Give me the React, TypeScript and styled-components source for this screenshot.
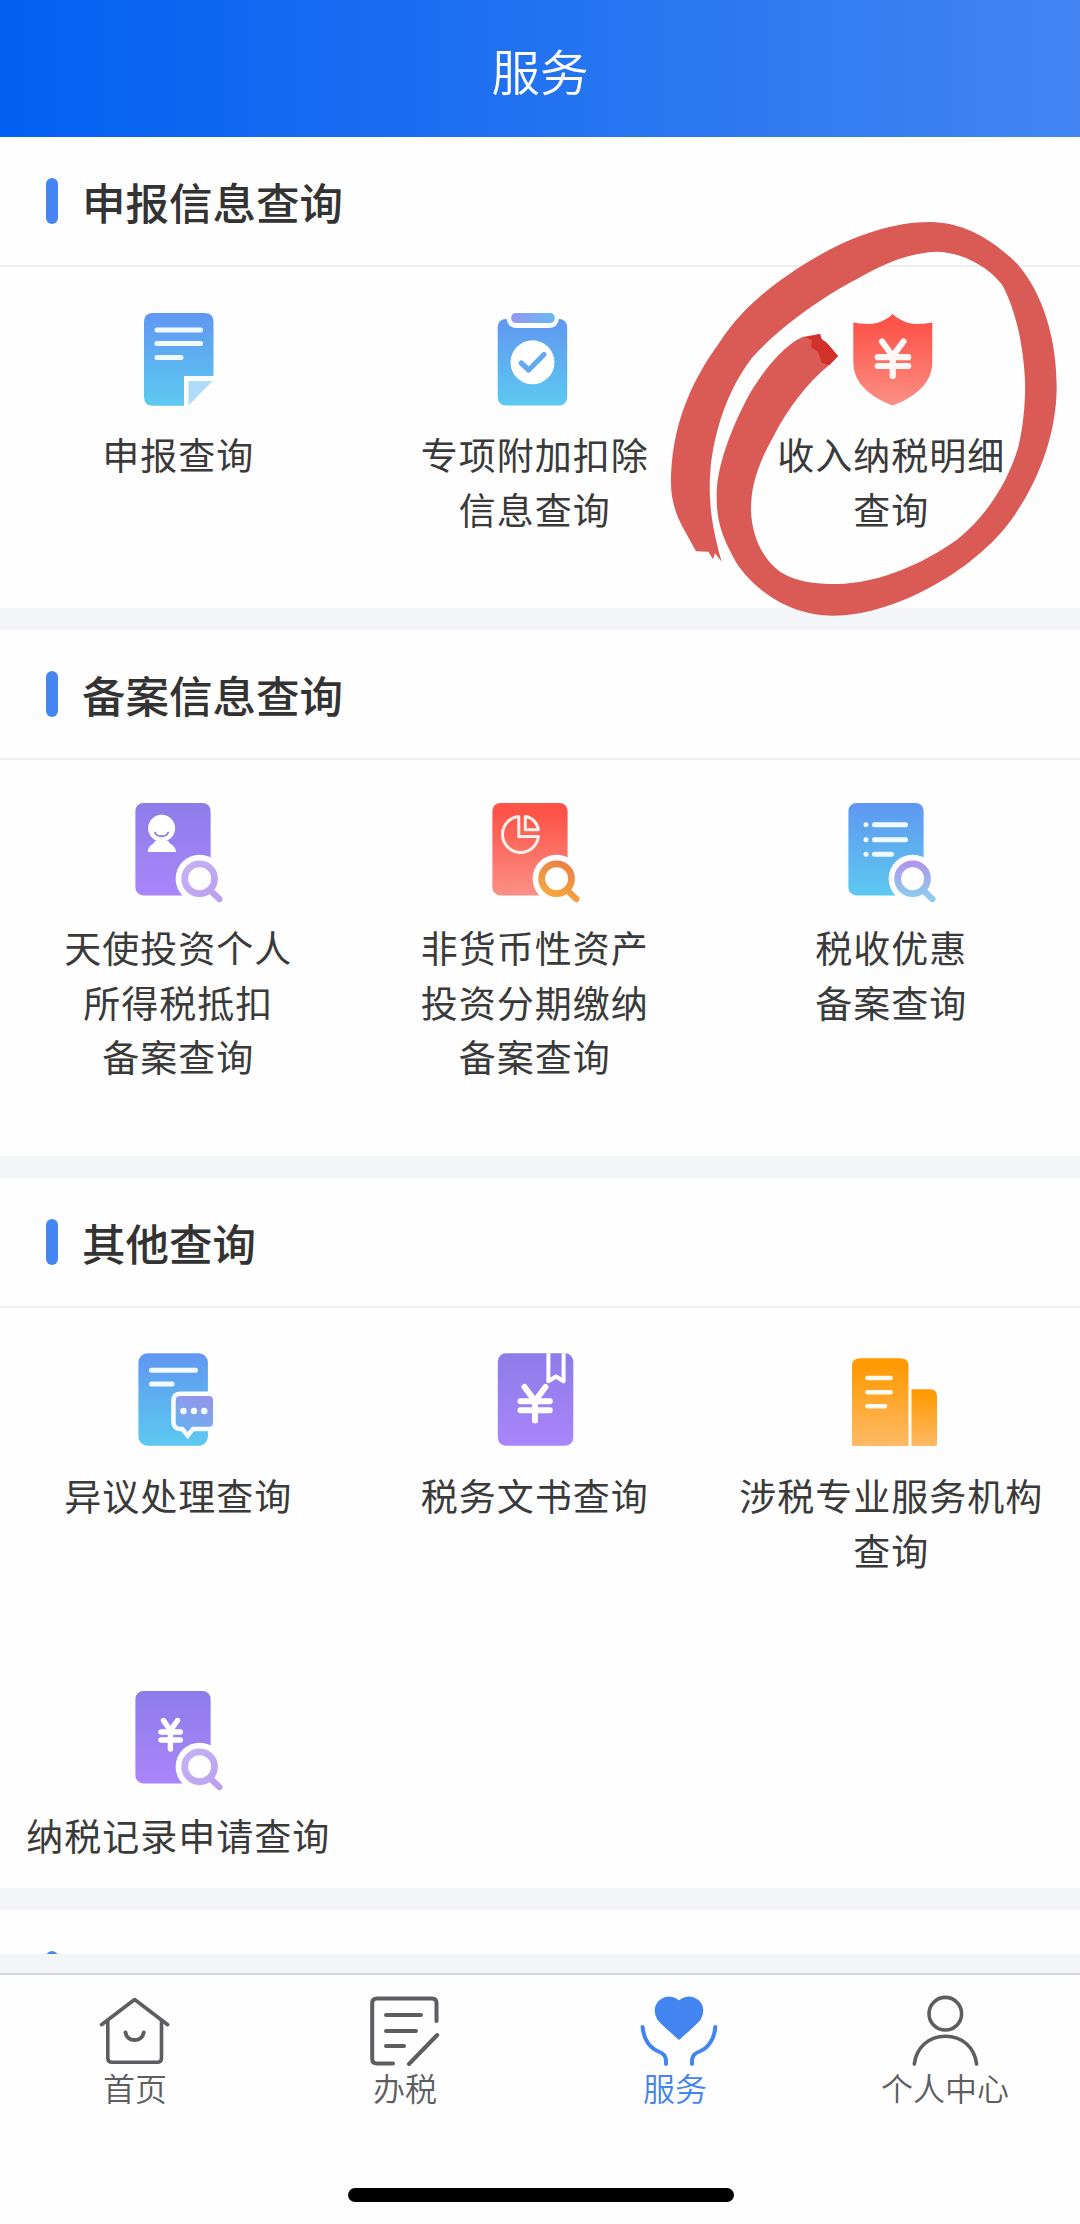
import React from "react";
import styled, { createGlobalStyle } from "styled-components";

const GlobalStyle = createGlobalStyle`
  * { box-sizing: border-box; }
  html, body { margin: 0; padding: 0; background: #fff; }
  body { font-family: "Noto Sans CJK SC", "Noto Sans", sans-serif; }
  h1, h2, p { margin: 0; }
  svg { display: block; }
`;

const Screen = styled.div`
  width: 1080px;
  height: 2224px;
  display: flex;
  flex-direction: column;
  overflow: hidden;
  background: #fefefe;
`;

const Header = styled.header`
  flex: none;
  height: 137px;
  display: flex;
  align-items: center;
  justify-content: center;
  padding-top: 3px;
  background: linear-gradient(90deg, #0160f3 0%, #1f70f1 45%, #4285f3 100%);
`;

const HeaderTitle = styled.h1`
  font-size: 48.5px;
  line-height: 60px;
  font-weight: 350;
  color: #fff;
`;

const Content = styled.main`
  height: 1817px;
  flex: none;
  display: flex;
  flex-direction: column;
  gap: 22px;
  overflow: hidden;
  background: #f4f5f9;
`;

const Section = styled.section<{ $height: number }>`
  position: relative;
  flex: none;
  height: ${(p) => p.$height}px;
  background: #fefefe;
`;

const SectionHead = styled.div`
  height: 130px;
  display: flex;
  align-items: center;
  gap: 24px;
  padding: 0 46px 1px;
  border-bottom: 2px solid #eeeff1;
`;

const Marker = styled.span`
  width: 12px;
  height: 46px;
  border-radius: 6px;
  background: #4586f3;
`;

const SectionTitle = styled.h2`
  font-size: 43.5px;
  line-height: 60px;
  font-weight: 500;
  padding-top: 2px;
  color: #333;
`;

const Grid = styled.div`
  display: grid;
  grid-template-columns: repeat(3, 356.5px);
`;

const Entry = styled.div`
  display: flex;
  flex-direction: column;
  align-items: center;
  gap: 10px;
  padding: 30px 0 71px;
`;

const EntryLabel = styled.p`
  font-size: 37px;
  letter-spacing: 1px;
  line-height: 54.6px;
  text-align: center;
  white-space: nowrap;
  color: #3a3a3a;
`;

const Scribble = styled.svg`
  position: absolute;
  left: 640px;
  top: 63px;
  z-index: 2;
  pointer-events: none;
`;

const BottomGap = styled.div`
  flex: none;
  height: 19px;
  background: #f4f5f9;
`;

const TabBar = styled.nav`
  flex: none;
  height: 145px;
  display: grid;
  grid-template-columns: repeat(4, 1fr);
  padding-top: 15px;
  border-top: 2px solid #d4d5d8;
`;

const Tab = styled.div<{ $active?: boolean }>`
  display: flex;
  flex-direction: column;
  align-items: center;
  color: ${(p) => (p.$active ? "#4285f0" : "#5e5e62")};
`;

const TabLabel = styled.span`
  font-size: 32px;
  line-height: 38px;
  font-weight: 350;
`;

const HomeArea = styled.div`
  flex: 1;
  display: flex;
  justify-content: center;
  align-items: flex-end;
  padding: 0 0 22px 1px;
`;

const HomeIndicator = styled.div`
  width: 386px;
  height: 14px;
  border-radius: 7px;
  background: #000;
`;

const GradientDefs = () => (
  <svg width="0" height="0" style={{ position: "absolute" }} aria-hidden="true">
    <defs>
      <linearGradient id="blue" x1="0" y1="0" x2="0" y2="1">
        <stop offset="0" stopColor="#6097f1" />
        <stop offset="1" stopColor="#5cc9f0" />
      </linearGradient>
      <linearGradient id="purple" x1="0" y1="0" x2="0" y2="1">
        <stop offset="0" stopColor="#8c7ce8" />
        <stop offset="1" stopColor="#aa85fb" />
      </linearGradient>
      <linearGradient id="red" x1="0" y1="0" x2="0" y2="1">
        <stop offset="0.1" stopColor="#fd5348" />
        <stop offset="1" stopColor="#fb9085" />
      </linearGradient>
      <linearGradient id="orange" x1="0" y1="0" x2="0" y2="1">
        <stop offset="0.1" stopColor="#ff9a05" />
        <stop offset="1" stopColor="#ffba66" />
      </linearGradient>
      <linearGradient id="clip" x1="0" y1="0" x2="1" y2="0">
        <stop offset="0" stopColor="#9499ee" />
        <stop offset="1" stopColor="#68b8f2" />
      </linearGradient>
      <linearGradient id="bubble" x1="0.7" y1="0" x2="0.3" y2="1">
        <stop offset="0" stopColor="#9594e8" />
        <stop offset="1" stopColor="#68b2f1" />
      </linearGradient>
      <linearGradient id="lensPurple" gradientUnits="userSpaceOnUse" x1="64" y1="72" x2="100" y2="110">
        <stop offset="0" stopColor="#c6b2f4" />
        <stop offset="1" stopColor="#bba0ee" />
      </linearGradient>
      <linearGradient id="lensOrange" gradientUnits="userSpaceOnUse" x1="90" y1="72" x2="74" y2="106">
        <stop offset="0" stopColor="#ec8048" />
        <stop offset="1" stopColor="#f6a83c" />
      </linearGradient>
      <linearGradient id="lensBlue" gradientUnits="userSpaceOnUse" x1="82" y1="72" x2="82" y2="108">
        <stop offset="0" stopColor="#b094ea" />
        <stop offset="1" stopColor="#8ccdf0" />
      </linearGradient>
    </defs>
  </svg>
);

const IconBox = ({ children }: { children: React.ReactNode }) => (
  <svg width="120" height="120" viewBox="0 0 120 120" fill="none" strokeLinecap="round" strokeLinejoin="round">
    {children}
  </svg>
);

const Lens = ({ tone }: { tone: string }) => (
  <g>
    <circle cx="81.6" cy="88.7" r="24" fill="#fefefe" />
    <path d="M94 102L101.3 109" stroke={`url(#${tone})`} strokeWidth="6.4" />
    <circle cx="81.6" cy="88.7" r="14.9" stroke={`url(#${tone})`} strokeWidth="6.8" />
  </g>
);

const Page = ({ tone, children }: { tone: string; children: React.ReactNode }) => (
  <>
    <rect x="17.4" y="13" width="75.2" height="92.4" rx="8" fill={`url(#${tone})`} />
    {children}
  </>
);

const ReportIcon = () => (
  <IconBox>
    <path d="M35 16H86.5Q95.5 16 95.5 25V79H66V108.7H35Q26 108.7 26 99.7V25Q26 16 35 16Z" fill="url(#blue)" />
    <path d="M70.5 84H94.5L70.5 108.5Z" fill="#afdcf9" />
    <path d="M39 33H82.5M39 46.5H82.5M39 60.4H63" stroke="#f0faff" strokeWidth="5" />
  </IconBox>
);

const ClipboardIcon = () => (
  <IconBox>
    <rect x="22.7" y="22" width="69.5" height="86.5" rx="8" fill="url(#blue)" />
    <rect x="31.7" y="11" width="52" height="20" rx="9" fill="#fefefe" />
    <rect x="36.2" y="16" width="43.5" height="10" rx="4.5" fill="url(#clip)" />
    <circle cx="57.5" cy="65.3" r="22" fill="#fefefe" />
    <path d="M46.2 66L53.7 73L69 57.5" stroke="#62a9f0" strokeWidth="5.2" />
  </IconBox>
);

const ShieldIcon = () => (
  <IconBox>
    <path
      d="M61.7 17C57 21.5 49 26.8 38 27C31 27.1 26.5 26 22.3 25.5V65C22.3 88 42 101 61.7 108.5C81.5 101 101.3 88 101.3 65V25.5C97 26 92.5 27.1 85.5 27C74.5 26.8 66.5 21.5 61.7 17Z"
      fill="url(#red)"
    />
    <path d="M51 44.5L61.7 59L72.5 44.5M61.7 59V79M46.8 60.2H77.2M46.8 69H77.2" stroke="#fff8f6" strokeWidth="6.2" strokeLinejoin="miter" />
  </IconBox>
);

const InvestorIcon = () => (
  <IconBox>
    <Page tone="purple">
      <circle cx="43.6" cy="38.3" r="13.5" fill="#fff" />
      <path d="M37 51C37 54 29.7 55 29.7 62H58C58 55 50.5 54 50.5 51Z" fill="#fff" />
      <path d="M37 42.5C39 47.5 48 47.5 50.2 42.5" stroke="#8a7ad8" strokeWidth="1.8" />
    </Page>
    <Lens tone="lensPurple" />
  </IconBox>
);

const PieIcon = () => (
  <IconBox>
    <Page tone="red">
      <path d="M43.8 26.5A18 18 0 1 0 63.4 46.4H43.8Z" stroke="#fff0ec" strokeWidth="3" />
      <path d="M50.3 26.5V39.8H63.3C62.5 33 57 27.3 50.3 26.5Z" stroke="#fff0ec" strokeWidth="3" />
    </Page>
    <Lens tone="lensOrange" />
  </IconBox>
);

const ListIcon = () => (
  <IconBox>
    <Page tone="blue">
      <path d="M43.5 34.7H74.5M43.5 49.7H74.5M43.5 64.3H60.5" stroke="#effaff" strokeWidth="5" />
      <path d="M35 34.7H35.01M35 49.7H35.01M35 64.3H35.01" stroke="#effaff" strokeWidth="5" />
    </Page>
    <Lens tone="lensBlue" />
  </IconBox>
);

const ObjectionIcon = () => (
  <IconBox>
    <rect x="20.4" y="15.3" width="69.5" height="92.4" rx="9" fill="url(#blue)" />
    <path d="M33.5 32.3H77.5M33.5 46H54" stroke="#f0faff" strokeWidth="5" />
    <path
      d="M62 58H91Q95 58 95 62V84.7Q95 88.7 91 88.7H74L69.7 94L65.4 88.7H62Q57.7 88.7 57.7 84V62.5Q57.7 58 62 58Z"
      fill="url(#bubble)"
      stroke="#fafdff"
      strokeWidth="9"
      strokeLinejoin="miter"
      paintOrder="stroke"
    />
    <path d="M65.5 73H65.51M76 73H76.01M86.2 73H86.21" stroke="#f6fcff" strokeWidth="6.4" />
  </IconBox>
);

const DocumentIcon = () => (
  <IconBox>
    <rect x="22.8" y="15.3" width="75.5" height="92.4" rx="8" fill="url(#purple)" />
    <path d="M73.4 15.3V43.3L81 38.5L88.6 43.3V15.3" stroke="#fff" strokeWidth="4" strokeLinecap="butt" />
    <path d="M49.5 49L60 63L70.5 49M60 63V82.5M45.5 63.3H74.8M45.5 72.3H74.8" stroke="#fff" strokeWidth="6" strokeLinejoin="miter" />
  </IconBox>
);

const BuildingIcon = () => (
  <IconBox>
    <path d="M21 108V28Q21 20.3 29 20.3H69.5Q77.5 20.3 77.5 28V108Z" fill="url(#orange)" />
    <path d="M80.5 108V51.3H99Q106 51.3 106 58.5V108Z" fill="url(#orange)" />
    <path d="M36.5 40H59.5M36.5 54.2H59.5M36.5 68.2H54" stroke="#fffaf0" strokeWidth="4.6" />
  </IconBox>
);

const RecordIcon = () => (
  <IconBox>
    <Page tone="purple">
      <path d="M45.5 42.5L52.4 52.5L59.5 42.5M52.4 52.5V71M43 54H62.3M43 62H62.3" stroke="#fff" strokeWidth="5.4" strokeLinejoin="miter" />
    </Page>
    <Lens tone="lensPurple" />
  </IconBox>
);

const TabIcon = ({ children }: { children: React.ReactNode }) => (
  <svg width="80" height="78" viewBox="0 0 80 78" overflow="visible" fill="none" stroke="currentColor" strokeWidth="4" strokeLinecap="round" strokeLinejoin="round">
    {children}
  </svg>
);

const HomeIcon = () => (
  <TabIcon>
    <path d="M6.5 34.7L39.6 9.5L72.7 34.7" strokeWidth="3.6" />
    <path d="M12.8 31V68Q12.8 72.3 17 72.3H62.3Q66.5 72.3 66.5 68V31" strokeWidth="3.6" />
    <path d="M30.5 42.5C32 52.5 47.2 52.5 48.7 42.5" />
  </TabIcon>
);

const FormIcon = () => (
  <TabIcon>
    <path d="M28 73.5H12Q7.2 73.5 7.2 69V13Q7.2 8.5 12 8.5H67Q71.5 8.5 71.5 13V31" />
    <path d="M21 25H56M21 41H51M21 56H39M44 74L72.2 45" />
  </TabIcon>
);

const CareIcon = () => (
  <TabIcon>
    <path d="M44 48.5C40 44 28 35 23.5 29C19 22 21 14 26 10.5C32 6.2 39.5 7.5 44 12C48.5 7.5 56 6.2 62 10.5C67 14 69 22 64.5 29C60 35 48 44 44 48.5Z" fill="currentColor" strokeWidth="2.5" />
    <path d="M7.6 37C8.5 48 14 57.5 22.5 61C29 63.5 31.5 66 31 74" />
    <path d="M80.3 37C79.5 48 74 57.5 65.5 61C59 63.5 56.5 66 57 74" />
  </TabIcon>
);

const PersonIcon = () => (
  <TabIcon>
    <circle cx="40.3" cy="23.7" r="16.3" strokeWidth="3.6" />
    <path d="M9.3 74C11.5 57 24 46.2 40.4 46.2C57 46.2 69.5 57 71.6 74" strokeWidth="3.6" />
  </TabIcon>
);

const MarkerCircle = () => (
  <Scribble width="440" height="440" viewBox="0 0 1320 1320" fill="none">
    <path
      fill="#da5b55"
      d="M168 1054L130 985C108 945 93 900 93 850C93 690 145 555 240 425C300 335 370 274 470 207C600 122 740 66 870 66C970 66 1060 120 1130 190C1210 280 1250 420 1250 560C1250 720 1180 880 1090 990C980 1120 760 1247 580 1247C460 1247 350 1180 290 1090C245 1010 228 960 230 880C232 800 270 690 330 580C390 480 450 425 490 410L540 402L545 418L560 428L594 468L565 497C500 550 440 630 400 710C350 800 333 860 333 930C335 1010 370 1080 420 1115C470 1145 520 1152 590 1152C720 1150 850 1090 950 1020C1050 940 1110 830 1135 740C1150 680 1157 600 1155 540C1150 440 1130 340 1090 260C1050 200 960 155 890 155C780 160 700 210 600 265C500 325 400 400 335 475C260 575 225 690 212 800C203 900 215 980 245 1085L225 1060L219 1078L205 1055Z"
    />
    <path fill="#d4302b" d="M495 412L540 402L545 418L560 428L572 442L594 468L568 496L545 488L534 455L514 442L516 420Z" />
  </Scribble>
);

type EntryData = { icon: React.ComponentType; lines: string[] };
type SectionData = { title: string; height: number; circled?: boolean; entries: EntryData[] };

const sections: SectionData[] = [
  {
    title: "申报信息查询",
    height: 471,
    circled: true,
    entries: [
      { icon: ReportIcon, lines: ["申报查询"] },
      { icon: ClipboardIcon, lines: ["专项附加扣除", "信息查询"] },
      { icon: ShieldIcon, lines: ["收入纳税明细", "查询"] },
    ],
  },
  {
    title: "备案信息查询",
    height: 526,
    entries: [
      { icon: InvestorIcon, lines: ["天使投资个人", "所得税抵扣", "备案查询"] },
      { icon: PieIcon, lines: ["非货币性资产", "投资分期缴纳", "备案查询"] },
      { icon: ListIcon, lines: ["税收优惠", "备案查询"] },
    ],
  },
  {
    title: "其他查询",
    height: 710,
    entries: [
      { icon: ObjectionIcon, lines: ["异议处理查询"] },
      { icon: DocumentIcon, lines: ["税务文书查询"] },
      { icon: BuildingIcon, lines: ["涉税专业服务机构", "查询"] },
      { icon: RecordIcon, lines: ["纳税记录申请查询"] },
    ],
  },
  { title: "", height: 130, entries: [] },
];

const tabs = [
  { icon: HomeIcon, label: "首页" },
  { icon: FormIcon, label: "办税" },
  { icon: CareIcon, label: "服务", active: true },
  { icon: PersonIcon, label: "个人中心" },
];

export default function App() {
  return (
    <Screen>
      <GlobalStyle />
      <GradientDefs />
      <Header>
        <HeaderTitle>服务</HeaderTitle>
      </Header>
      <Content>
        {sections.map((section, i) => (
          <Section key={i} $height={section.height}>
            <SectionHead>
              <Marker />
              <SectionTitle>{section.title}</SectionTitle>
            </SectionHead>
            <Grid>
              {section.entries.map(({ icon: Icon, lines }) => (
                <Entry key={lines[0]}>
                  <Icon />
                  <EntryLabel>
                    {lines.map((line, n) => (
                      <React.Fragment key={line}>
                        {n > 0 && <br />}
                        {line}
                      </React.Fragment>
                    ))}
                  </EntryLabel>
                </Entry>
              ))}
            </Grid>
            {section.circled && <MarkerCircle />}
          </Section>
        ))}
      </Content>
      <BottomGap />
      <TabBar>
        {tabs.map(({ icon: Icon, label, active }) => (
          <Tab key={label} $active={active}>
            <Icon />
            <TabLabel>{label}</TabLabel>
          </Tab>
        ))}
      </TabBar>
      <HomeArea>
        <HomeIndicator />
      </HomeArea>
    </Screen>
  );
}
